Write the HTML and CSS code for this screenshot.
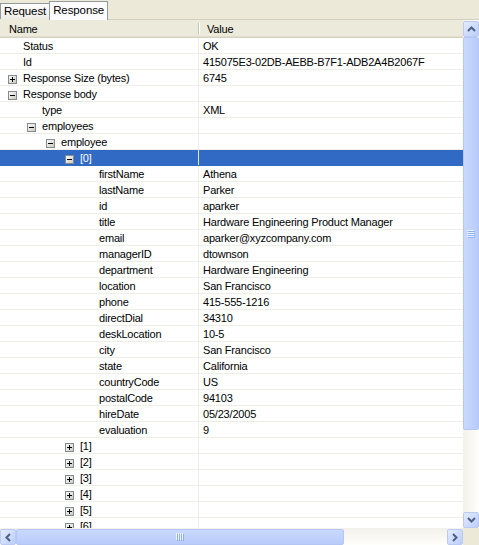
FILE: index.html
```html
<!DOCTYPE html>
<html>
<head>
<meta charset="utf-8">
<link rel="stylesheet" href="styles.css">
</head>
<body>
<div class="app">
  <div class="tabs">
    <div class="tab">Request</div>
    <div class="tab active">Response</div>
    <div class="tab-fill"></div>
  </div>
  <div class="main">
    <div class="table">
      <div class="header">
        <div class="h-name">Name</div>
        <div class="h-val">Value</div>
      </div>
      <div class="rows">
        <div class="row"><div class="c-name t1">Status</div><div class="c-val">OK</div></div>
        <div class="row"><div class="c-name t1">Id</div><div class="c-val">415075E3-02DB-AEBB-B7F1-ADB2A4B2067F</div></div>
        <div class="row"><div class="c-name b1"><svg class="box" width="9" height="9" viewBox="0 0 9 9"><rect x="0.5" y="0.5" width="8" height="8" fill="url(#g)" stroke="#7F8C94"/><path d="M2 4.5h5M4.5 2v5" stroke="#000"/></svg>Response Size (bytes)</div><div class="c-val">6745</div></div>
        <div class="row"><div class="c-name b1"><svg class="box" width="9" height="9" viewBox="0 0 9 9"><rect x="0.5" y="0.5" width="8" height="8" fill="url(#g)" stroke="#7F8C94"/><path d="M2 4.5h5" stroke="#000"/></svg>Response body</div><div class="c-val"></div></div>
        <div class="row"><div class="c-name t2">type</div><div class="c-val">XML</div></div>
        <div class="row"><div class="c-name b2"><svg class="box" width="9" height="9" viewBox="0 0 9 9"><rect x="0.5" y="0.5" width="8" height="8" fill="url(#g)" stroke="#7F8C94"/><path d="M2 4.5h5" stroke="#000"/></svg>employees</div><div class="c-val"></div></div>
        <div class="row"><div class="c-name b3"><svg class="box" width="9" height="9" viewBox="0 0 9 9"><rect x="0.5" y="0.5" width="8" height="8" fill="url(#g)" stroke="#7F8C94"/><path d="M2 4.5h5" stroke="#000"/></svg>employee</div><div class="c-val"></div></div>
        <div class="row sel"><div class="c-name b4"><svg class="box" width="9" height="9" viewBox="0 0 9 9"><rect x="0.5" y="0.5" width="8" height="8" fill="url(#g)" stroke="#7F8C94"/><path d="M2 4.5h5" stroke="#000"/></svg>[0]</div><div class="c-val"></div></div>
        <div class="row"><div class="c-name t5">firstName</div><div class="c-val">Athena</div></div>
        <div class="row"><div class="c-name t5">lastName</div><div class="c-val">Parker</div></div>
        <div class="row"><div class="c-name t5">id</div><div class="c-val">aparker</div></div>
        <div class="row"><div class="c-name t5">title</div><div class="c-val">Hardware Engineering Product Manager</div></div>
        <div class="row"><div class="c-name t5">email</div><div class="c-val">aparker@xyzcompany.com</div></div>
        <div class="row"><div class="c-name t5">managerID</div><div class="c-val">dtownson</div></div>
        <div class="row"><div class="c-name t5">department</div><div class="c-val">Hardware Engineering</div></div>
        <div class="row"><div class="c-name t5">location</div><div class="c-val">San Francisco</div></div>
        <div class="row"><div class="c-name t5">phone</div><div class="c-val">415-555-1216</div></div>
        <div class="row"><div class="c-name t5">directDial</div><div class="c-val">34310</div></div>
        <div class="row"><div class="c-name t5">deskLocation</div><div class="c-val">10-5</div></div>
        <div class="row"><div class="c-name t5">city</div><div class="c-val">San Francisco</div></div>
        <div class="row"><div class="c-name t5">state</div><div class="c-val">California</div></div>
        <div class="row"><div class="c-name t5">countryCode</div><div class="c-val">US</div></div>
        <div class="row"><div class="c-name t5">postalCode</div><div class="c-val">94103</div></div>
        <div class="row"><div class="c-name t5">hireDate</div><div class="c-val">05/23/2005</div></div>
        <div class="row"><div class="c-name t5">evaluation</div><div class="c-val">9</div></div>
        <div class="row"><div class="c-name b4"><svg class="box" width="9" height="9" viewBox="0 0 9 9"><rect x="0.5" y="0.5" width="8" height="8" fill="url(#g)" stroke="#7F8C94"/><path d="M2 4.5h5M4.5 2v5" stroke="#000"/></svg>[1]</div><div class="c-val"></div></div>
        <div class="row"><div class="c-name b4"><svg class="box" width="9" height="9" viewBox="0 0 9 9"><rect x="0.5" y="0.5" width="8" height="8" fill="url(#g)" stroke="#7F8C94"/><path d="M2 4.5h5M4.5 2v5" stroke="#000"/></svg>[2]</div><div class="c-val"></div></div>
        <div class="row"><div class="c-name b4"><svg class="box" width="9" height="9" viewBox="0 0 9 9"><rect x="0.5" y="0.5" width="8" height="8" fill="url(#g)" stroke="#7F8C94"/><path d="M2 4.5h5M4.5 2v5" stroke="#000"/></svg>[3]</div><div class="c-val"></div></div>
        <div class="row"><div class="c-name b4"><svg class="box" width="9" height="9" viewBox="0 0 9 9"><rect x="0.5" y="0.5" width="8" height="8" fill="url(#g)" stroke="#7F8C94"/><path d="M2 4.5h5M4.5 2v5" stroke="#000"/></svg>[4]</div><div class="c-val"></div></div>
        <div class="row"><div class="c-name b4"><svg class="box" width="9" height="9" viewBox="0 0 9 9"><rect x="0.5" y="0.5" width="8" height="8" fill="url(#g)" stroke="#7F8C94"/><path d="M2 4.5h5M4.5 2v5" stroke="#000"/></svg>[5]</div><div class="c-val"></div></div>
        <div class="row"><div class="c-name b4"><svg class="box" width="9" height="9" viewBox="0 0 9 9"><rect x="0.5" y="0.5" width="8" height="8" fill="url(#g)" stroke="#7F8C94"/><path d="M2 4.5h5M4.5 2v5" stroke="#000"/></svg>[6]</div><div class="c-val"></div></div>
      </div>
    </div>
    <div class="vscroll">
      <div class="sbtn">
        <svg width="9" height="6" viewBox="0 0 9 6"><path d="M1 5L4.5 1.5L8 5" fill="none" stroke="#4D6185" stroke-width="2"/></svg>
      </div>
      <div class="vthumb">
        <svg width="8" height="8" viewBox="0 0 8 8"><path d="M0 0.5h7M0 2.5h7M0 4.5h7M0 6.5h7" stroke="#EEF4FE"/><path d="M1 1.5h7M1 3.5h7M1 5.5h7M1 7.5h7" stroke="#8CB0F8"/></svg>
      </div>
      <div class="vtrack"></div>
      <div class="sbtn">
        <svg width="9" height="6" viewBox="0 0 9 6"><path d="M1 1L4.5 4.5L8 1" fill="none" stroke="#4D6185" stroke-width="2"/></svg>
      </div>
    </div>
  </div>
  <div class="hbar">
    <div class="hscroll">
      <div class="sbtn">
        <svg width="6" height="9" viewBox="0 0 6 9"><path d="M5 1L1.5 4.5L5 8" fill="none" stroke="#4D6185" stroke-width="2"/></svg>
      </div>
      <div class="hthumb">
        <svg width="8" height="8" viewBox="0 0 8 8"><path d="M0.5 0v7M2.5 0v7M4.5 0v7M6.5 0v7" stroke="#EEF4FE"/><path d="M1.5 1v7M3.5 1v7M5.5 1v7M7.5 1v7" stroke="#8CB0F8"/></svg>
      </div>
      <div class="htrack"></div>
      <div class="sbtn">
        <svg width="6" height="9" viewBox="0 0 6 9"><path d="M1 1L4.5 4.5L1 8" fill="none" stroke="#4D6185" stroke-width="2"/></svg>
      </div>
    </div>
    <div class="corner"></div>
  </div>
</div>
<svg width="0" height="0" class="defs"><defs><linearGradient id="g" x1="0" y1="0" x2="1" y2="1"><stop offset="0" stop-color="#FFFFFF"/><stop offset="1" stop-color="#C9C6B8"/></linearGradient></defs></svg>
</body>
</html>
```
FILE: styles.css
```css
html, body {
  margin: 0;
  padding: 0;
  background: #ECE9D8;
}
body {
  font-family: "Liberation Sans", Arial, sans-serif;
  font-size: 11px;
  letter-spacing: -0.2px;
  color: #000;
  overflow: hidden;
}
.defs { position: absolute; }
.app {
  width: 479px;
  height: 545px;
  display: flex;
  flex-direction: column;
  overflow: hidden;
}
.tabs {
  height: 20px;
  display: flex;
  align-items: flex-end;
  background: #ECE9D8;
  flex: none;
}
.tab {
  height: 16px;
  line-height: 15px;
  padding: 0 3px 0 3px;
  border: 1px solid #919B9C;
  border-bottom: none;
  border-right: none;
  background: linear-gradient(#FEFEFE, #ECEBE6);
  font-size: 11.5px;
  letter-spacing: -0.1px;
  box-sizing: border-box;
  margin-bottom: 1px;
}
.tab.active {
  height: 19px;
  line-height: 17px;
  background: #FCFCFE;
  border-right: 1px solid #919B9C;
  margin-bottom: 0;
  padding: 0 3px 0 3px;
}
.tab-fill {
  flex: 1;
  border-bottom: 1px solid #D0D0BF;
  align-self: stretch;
}
.main {
  display: flex;
  height: 508px;
  flex: none;
}
.table {
  width: 463px;
  overflow: hidden;
  background: #fff;
  display: flex;
  flex-direction: column;
}
.header {
  height: 18px;
  display: flex;
  background: #EBEADB;
  box-shadow: inset 0 -1px #D6D2C2, inset 0 -2px #E2DECD;
  flex: none;
  font-size: 11px;
}
.h-name {
  width: 199px;
  padding-left: 9px;
  box-sizing: border-box;
  line-height: 18px;
  position: relative;
}
.h-name::after {
  content: "";
  position: absolute;
  right: 0;
  top: 3px;
  height: 12px;
  width: 1px;
  background: #C7C5B2;
  box-shadow: 1px 0 #fff;
}
.h-val {
  flex: 1;
  padding-left: 8px;
  line-height: 18px;
}
.rows {
  display: flex;
  flex-direction: column;
}
.row {
  height: 16px;
  display: flex;
  flex: none;
  box-sizing: border-box;
  border-bottom: 1px solid #EFEEE6;
}
.c-name {
  width: 199px;
  height: 15px;
  box-sizing: border-box;
  display: flex;
  align-items: flex-start;
  border-right: 1px solid #EFEEE6;
  white-space: nowrap;
  line-height: 17px;
}
.c-val {
  flex: 1;
  padding-left: 4px;
  line-height: 17px;
  height: 15px;
  white-space: nowrap;
}
.row.sel {
  background: #316AC5;
  color: #fff;
  border-bottom-color: #316AC5;
}
.row.sel .c-name { border-right-color: #DCE6F6; }
.box { flex: none; margin-right: 6px; margin-top: 5px; }
.t1 { padding-left: 23px; }
.t2 { padding-left: 42px; }
.t5 { padding-left: 99px; }
.b1 { padding-left: 8px; }
.b2 { padding-left: 27px; }
.b3 { padding-left: 46px; }
.b4 { padding-left: 65px; }

.vscroll {
  width: 16px;
  display: flex;
  flex-direction: column;
  background: linear-gradient(90deg, #F3F1EB, #FEFEFB);
  padding-top: 1px;
  box-sizing: border-box;
}
.sbtn {
  width: 16px;
  height: 16px;
  flex: none;
  box-sizing: border-box;
  border: 1px solid #BBCAF3;
  border-radius: 2px;
  background: linear-gradient(135deg, #E3ECFE, #BBCDFA);
  display: flex;
  align-items: center;
  justify-content: center;
}
.vthumb {
  height: 393px;
  flex: none;
  box-sizing: border-box;
  border: 1px solid #B4C6F4;
  border-radius: 2px;
  background: linear-gradient(90deg, #C9D8FD, #B8CCFA);
  display: flex;
  align-items: center;
  justify-content: center;
}
.vtrack { flex: 1; }
.hbar {
  display: flex;
  height: 17px;
  flex: none;
}
.hscroll {
  width: 463px;
  display: flex;
  background: linear-gradient(#F3F1EB, #FEFEFB);
  padding-top: 1px;
  box-sizing: border-box;
}
.hthumb {
  width: 328px;
  flex: none;
  box-sizing: border-box;
  border: 1px solid #B4C6F4;
  border-radius: 2px;
  background: linear-gradient(#C9D8FD, #B8CCFA);
  display: flex;
  align-items: center;
  justify-content: center;
}
.htrack { flex: 1; }
.corner {
  flex: 1;
  background: #ECE9D8;
}
```
